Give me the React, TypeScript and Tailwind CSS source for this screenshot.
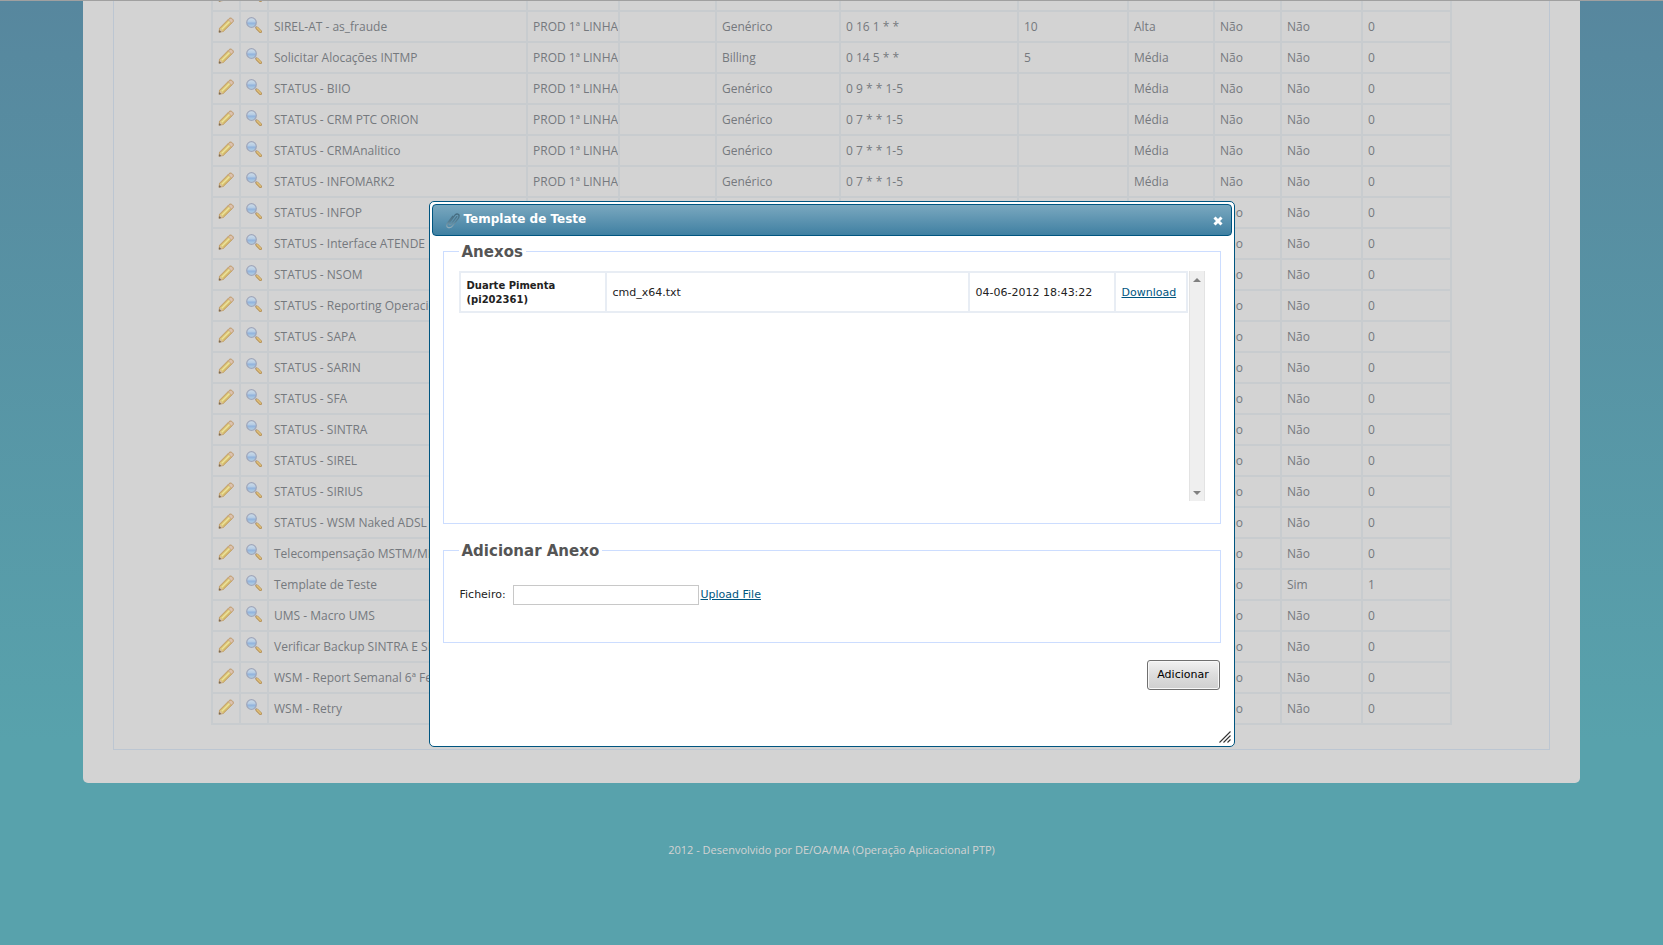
type Row = {
  name: string;
  team: string;
  kind: string;
  cron: string;
  time: string;
  priority: string;
  active: string;
  attachment: string;
  count: string;
};

const row = (
  name: string,
  kind = "Genérico",
  cron = "0 7 * * 1-5",
  time = "",
  priority = "Média",
  attachment = "Não",
  count = "0",
): Row => ({ name, team: "PROD 1ª LINHA", kind, cron, time, priority, active: "Não", attachment, count });

const rows: Row[] = [
  { name: "", team: "", kind: "", cron: "", time: "", priority: "", active: "", attachment: "", count: "" },
  row("SIREL-AT - as_fraude", "Genérico", "0 16 1 * *", "10", "Alta"),
  row("Solicitar Alocações INTMP", "Billing", "0 14 5 * *", "5"),
  row("STATUS - BIIO", "Genérico", "0 9 * * 1-5"),
  row("STATUS - CRM PTC ORION"),
  row("STATUS - CRMAnalitico"),
  row("STATUS - INFOMARK2"),
  row("STATUS - INFOP"),
  row("STATUS - Interface ATENDE"),
  row("STATUS - NSOM"),
  row("STATUS - Reporting Operacional"),
  row("STATUS - SAPA"),
  row("STATUS - SARIN"),
  row("STATUS - SFA"),
  row("STATUS - SINTRA"),
  row("STATUS - SIREL"),
  row("STATUS - SIRIUS"),
  row("STATUS - WSM Naked ADSL"),
  row("Telecompensação MSTM/MEO"),
  row("Template de Teste", "Genérico", "0 7 * * 1-5", "", "Média", "Sim", "1"),
  row("UMS - Macro UMS"),
  row("Verificar Backup SINTRA E SIREL"),
  row("WSM - Report Semanal 6ª Feira"),
  row("WSM - Retry"),
];

function PencilIcon() {
  return (
    <svg viewBox="0 0 16 16" className="block size-4" aria-hidden="true">
      <path d="M1 15.200l.6-4L10.900 1.800c1-1 2.200-1 3.400.1s1.200 2.400.2 3.400L5.200 14.500z" fill="#dccb7c" stroke="#c09a62" strokeWidth="1" strokeLinejoin="round" />
      <path d="M2.900 11.300L11 3.200" stroke="#d6ba70" strokeWidth="1" />
      <path d="M3.900 12.100L12 4" stroke="#ece29c" strokeWidth="1.300" />
      <path d="M5.200 13.400L13.200 5.400" stroke="#cfae62" strokeWidth="1" />
      <path d="M10.200 2.700l3.300 3.400 1-1c.9-.9.800-2-.1-2.900-.9-.9-2.200-1-3-.2z" fill="#dcc3b0" stroke="#c09c80" strokeWidth=".7" />
      <path d="M1.400 14.800l.6-3.400 3 3z" fill="#d8bfa0" />
      <path d="M.8 15.600l.4-2.600 2.200 2.100z" fill="#77695a" />
    </svg>
  );
}

function MagnifierIcon() {
  return (
    <svg viewBox="0 0 16 16" className="block size-4" aria-hidden="true">
      <defs>
        <linearGradient id="lens" x1="0" y1="0" x2="0" y2="1">
          <stop offset="0" stopColor="#cfdde8" />
          <stop offset=".45" stopColor="#b3cbe4" />
          <stop offset=".55" stopColor="#8fb1dc" />
          <stop offset="1" stopColor="#b9d6e6" />
        </linearGradient>
      </defs>
      <path d="M9.500 9.600l1.500 1.500" stroke="#9a9ba6" strokeWidth="2" />
      <path d="M11 11.100l3.500 3.500" stroke="#b8955e" strokeWidth="3" strokeLinecap="round" />
      <path d="M11 10.800l3.400 3.500" stroke="#dfc078" strokeWidth="1.500" strokeLinecap="round" />
      <circle cx="5.500" cy="5.500" r="4.800" fill="url(#lens)" stroke="#9fa6ba" strokeWidth="1.200" />
    </svg>
  );
}

function PaperclipIcon() {
  return (
    <svg viewBox="0 0 16 17" className="h-[17px] w-4 shrink-0" fill="none" strokeLinecap="round" aria-hidden="true">
      <defs>
        <linearGradient id="clip" gradientUnits="userSpaceOnUse" x1="0" y1="0" x2="0" y2="17">
          <stop offset="0" stopColor="#3f6579" />
          <stop offset=".55" stopColor="#547d92" />
          <stop offset="1" stopColor="#9bb5c1" />
        </linearGradient>
      </defs>
      <path
        d="M4.500 10.500L9.700 3.400c1.700-2.400 5.200-1.500 4.200 1.600-.2.700-.6 1.300-1 1.900l-5.600 7.300c-1.800 2.300-6.400 2-5.500-1.600.1-.6.500-1.100.9-1.600l4.900-6.700M4.500 10.500c-1.200 1.900.8 2.800 2 1.200l5.300-7.100"
        stroke="url(#clip)"
        strokeWidth="1.300"
      />
    </svg>
  );
}

const cell = "overflow-hidden border-2 border-[#c8cccf] pl-[5px] whitespace-nowrap";
const iconCell = "border-2 border-[#c8cccf] pb-[3px]";

function TaskTable() {
  return (
    <table className="mx-auto -mt-[22px] w-[1241px] table-fixed border-collapse text-[12px] leading-4 text-[#75797e]">
      <colgroup>
        <col className="w-[28px]" />
        <col className="w-[28px]" />
        <col className="w-[259px]" />
        <col className="w-[92px]" />
        <col className="w-[97px]" />
        <col className="w-[124px]" />
        <col className="w-[178px]" />
        <col className="w-[110px]" />
        <col className="w-[86px]" />
        <col className="w-[67px]" />
        <col className="w-[81px]" />
        <col className="w-[89px]" />
      </colgroup>
      <tbody>
        {rows.map((r, i) => (
          <tr key={i} className="h-[31px]">
            <td className={iconCell}>
              <button type="button" aria-label={`Editar ${r.name}`} className="mx-auto block">
                <PencilIcon />
              </button>
            </td>
            <td className={iconCell}>
              <button type="button" aria-label={`Ver ${r.name}`} className="mx-auto block">
                <MagnifierIcon />
              </button>
            </td>
            <td className={cell}>{r.name}</td>
            <td className={cell}>{r.team}</td>
            <td className={cell}></td>
            <td className={cell}>{r.kind}</td>
            <td className={cell}>{r.cron}</td>
            <td className={cell}>{r.time}</td>
            <td className={cell}>{r.priority}</td>
            <td className={cell}>{r.active}</td>
            <td className={cell}>{r.attachment}</td>
            <td className={cell}>{r.count}</td>
          </tr>
        ))}
      </tbody>
    </table>
  );
}

function Scrollbar() {
  return (
    <div className="flex w-4 flex-col justify-between border-x border-[#e3e3e3] bg-[#efefef]">
      <button type="button" aria-label="Subir" className="flex h-[18px] items-center justify-center">
        <svg viewBox="0 0 8 4" className="h-1 w-2" aria-hidden="true">
          <path d="M0 4L4 0l4 4z" fill="#808080" />
        </svg>
      </button>
      <button type="button" aria-label="Descer" className="flex h-4 items-center justify-center">
        <svg viewBox="0 0 8 4" className="h-1 w-2" aria-hidden="true">
          <path d="M0 0h8L4 4z" fill="#808080" />
        </svg>
      </button>
    </div>
  );
}

const attachCell = "border-2 border-[#e8edf4] px-1.5 pt-0.5 text-left";
const legend = "px-[3px] pt-px text-[15px] leading-[18px] font-bold text-[#555555]";

function AttachmentDialog() {
  return (
    <section
      role="dialog"
      aria-labelledby="dialog-title"
      className="relative w-[806px] rounded-[5px] border border-[#005580] bg-white p-[2px] font-['DejaVu_Sans',Verdana,sans-serif] text-[11px] text-[#222222]"
    >
      <header className="flex h-8 items-center rounded-[4px] border border-[#005580] bg-linear-to-b from-[#7aa8bf] to-[#3f80a2] pr-2 pl-3">
        <PaperclipIcon />
        <h2 id="dialog-title" className="ml-[3px] flex-1 pb-0.5 text-[12px] leading-4 font-bold text-white">
          Template de Teste
        </h2>
        <button type="button" aria-label="Fechar" className="pt-0.5">
          <svg viewBox="0 0 10 10" className="size-[10px]" aria-hidden="true">
            <path d="M1.500 1.500l7 7M8.500 1.500l-7 7" stroke="#fff" strokeWidth="3" />
          </svg>
        </button>
      </header>

      <form className="px-[11px] pt-1.5 pb-[54px]" onSubmit={(e) => e.preventDefault()}>
        <fieldset className="border border-[#ccddff] px-[15px] pt-2.5 pb-[22px]">
          <legend className={legend}>Anexos</legend>
          <div className="flex h-[230px] gap-px">
            <div className="flex-1">
              <table className="w-full table-fixed border-collapse">
                <colgroup>
                  <col className="w-[146px]" />
                  <col />
                  <col className="w-[146px]" />
                  <col className="w-[72px]" />
                </colgroup>
                <tbody>
                  <tr className="h-10 leading-[14px]">
                    <th scope="row" className={`text-[10px] ${attachCell}`}>
                      Duarte Pimenta (pi202361)
                    </th>
                    <td className={attachCell}>cmd_x64.txt</td>
                    <td className={attachCell}>04-06-2012 18:43:22</td>
                    <td className={attachCell}>
                      <a href="#download" className="text-[#005580] underline">
                        Download
                      </a>
                    </td>
                  </tr>
                </tbody>
              </table>
            </div>
            <Scrollbar />
          </div>
        </fieldset>

        <fieldset className="mt-[17px] border border-[#ccddff] px-[15px] pt-[25px] pb-[37px]">
          <legend className={legend}>Adicionar Anexo</legend>
          <div className="flex items-center">
            <label htmlFor="ficheiro" className="w-[54px] pt-px pl-px">
              Ficheiro:
            </label>
            <input id="ficheiro" type="text" className="h-5 w-[186px] border border-[#c8c8c8] bg-white px-1" />
            <a href="#upload" className="ml-0.5 pt-px text-[#005580] underline">
              Upload File
            </a>
          </div>
        </fieldset>

        <div className="mt-[17px] mr-px flex justify-end">
          <button
            type="submit"
            className="h-[30px] w-[73px] rounded-[3px] border border-[#707070] bg-linear-to-b from-[#f2f2f2] via-[#dddddd] via-50% to-[#cfcfcf] text-black inset-ring inset-ring-[#f8f8f8]"
          >
            Adicionar
          </button>
        </div>
      </form>

      <svg viewBox="0 0 12 12" className="absolute right-[3px] bottom-[3px] size-3" stroke="#333" strokeWidth="1.100" aria-hidden="true">
        <path d="M.5 11.500l11-11M4.500 11.500l7-7M8.500 11.500l3-3" />
      </svg>
    </section>
  );
}

export default function App() {
  return (
    <div className="relative min-h-screen overflow-hidden border-t border-[#a0a0a0] bg-[#58a2ac] bg-[linear-gradient(to_bottom,#57879e_0,#58a2ac_740px)] font-['Open_Sans','Trebuchet_MS',sans-serif]">
      <main className="mx-[83px] overflow-hidden rounded-b-[5px] bg-[#d3d3d3] px-[30px] pb-[33px]">
        <div className="overflow-hidden border-x border-b border-[#bcc6d2] pb-6">
          <TaskTable />
        </div>
      </main>
      <footer className="mt-[59px] text-center text-[11px] leading-4 text-[#d3d3d3]">
        2012 - Desenvolvido por DE/OA/MA (Operação Aplicacional PTP)
      </footer>
      <div className="absolute inset-x-0 top-[200px] flex justify-center">
        <AttachmentDialog />
      </div>
    </div>
  );
}
